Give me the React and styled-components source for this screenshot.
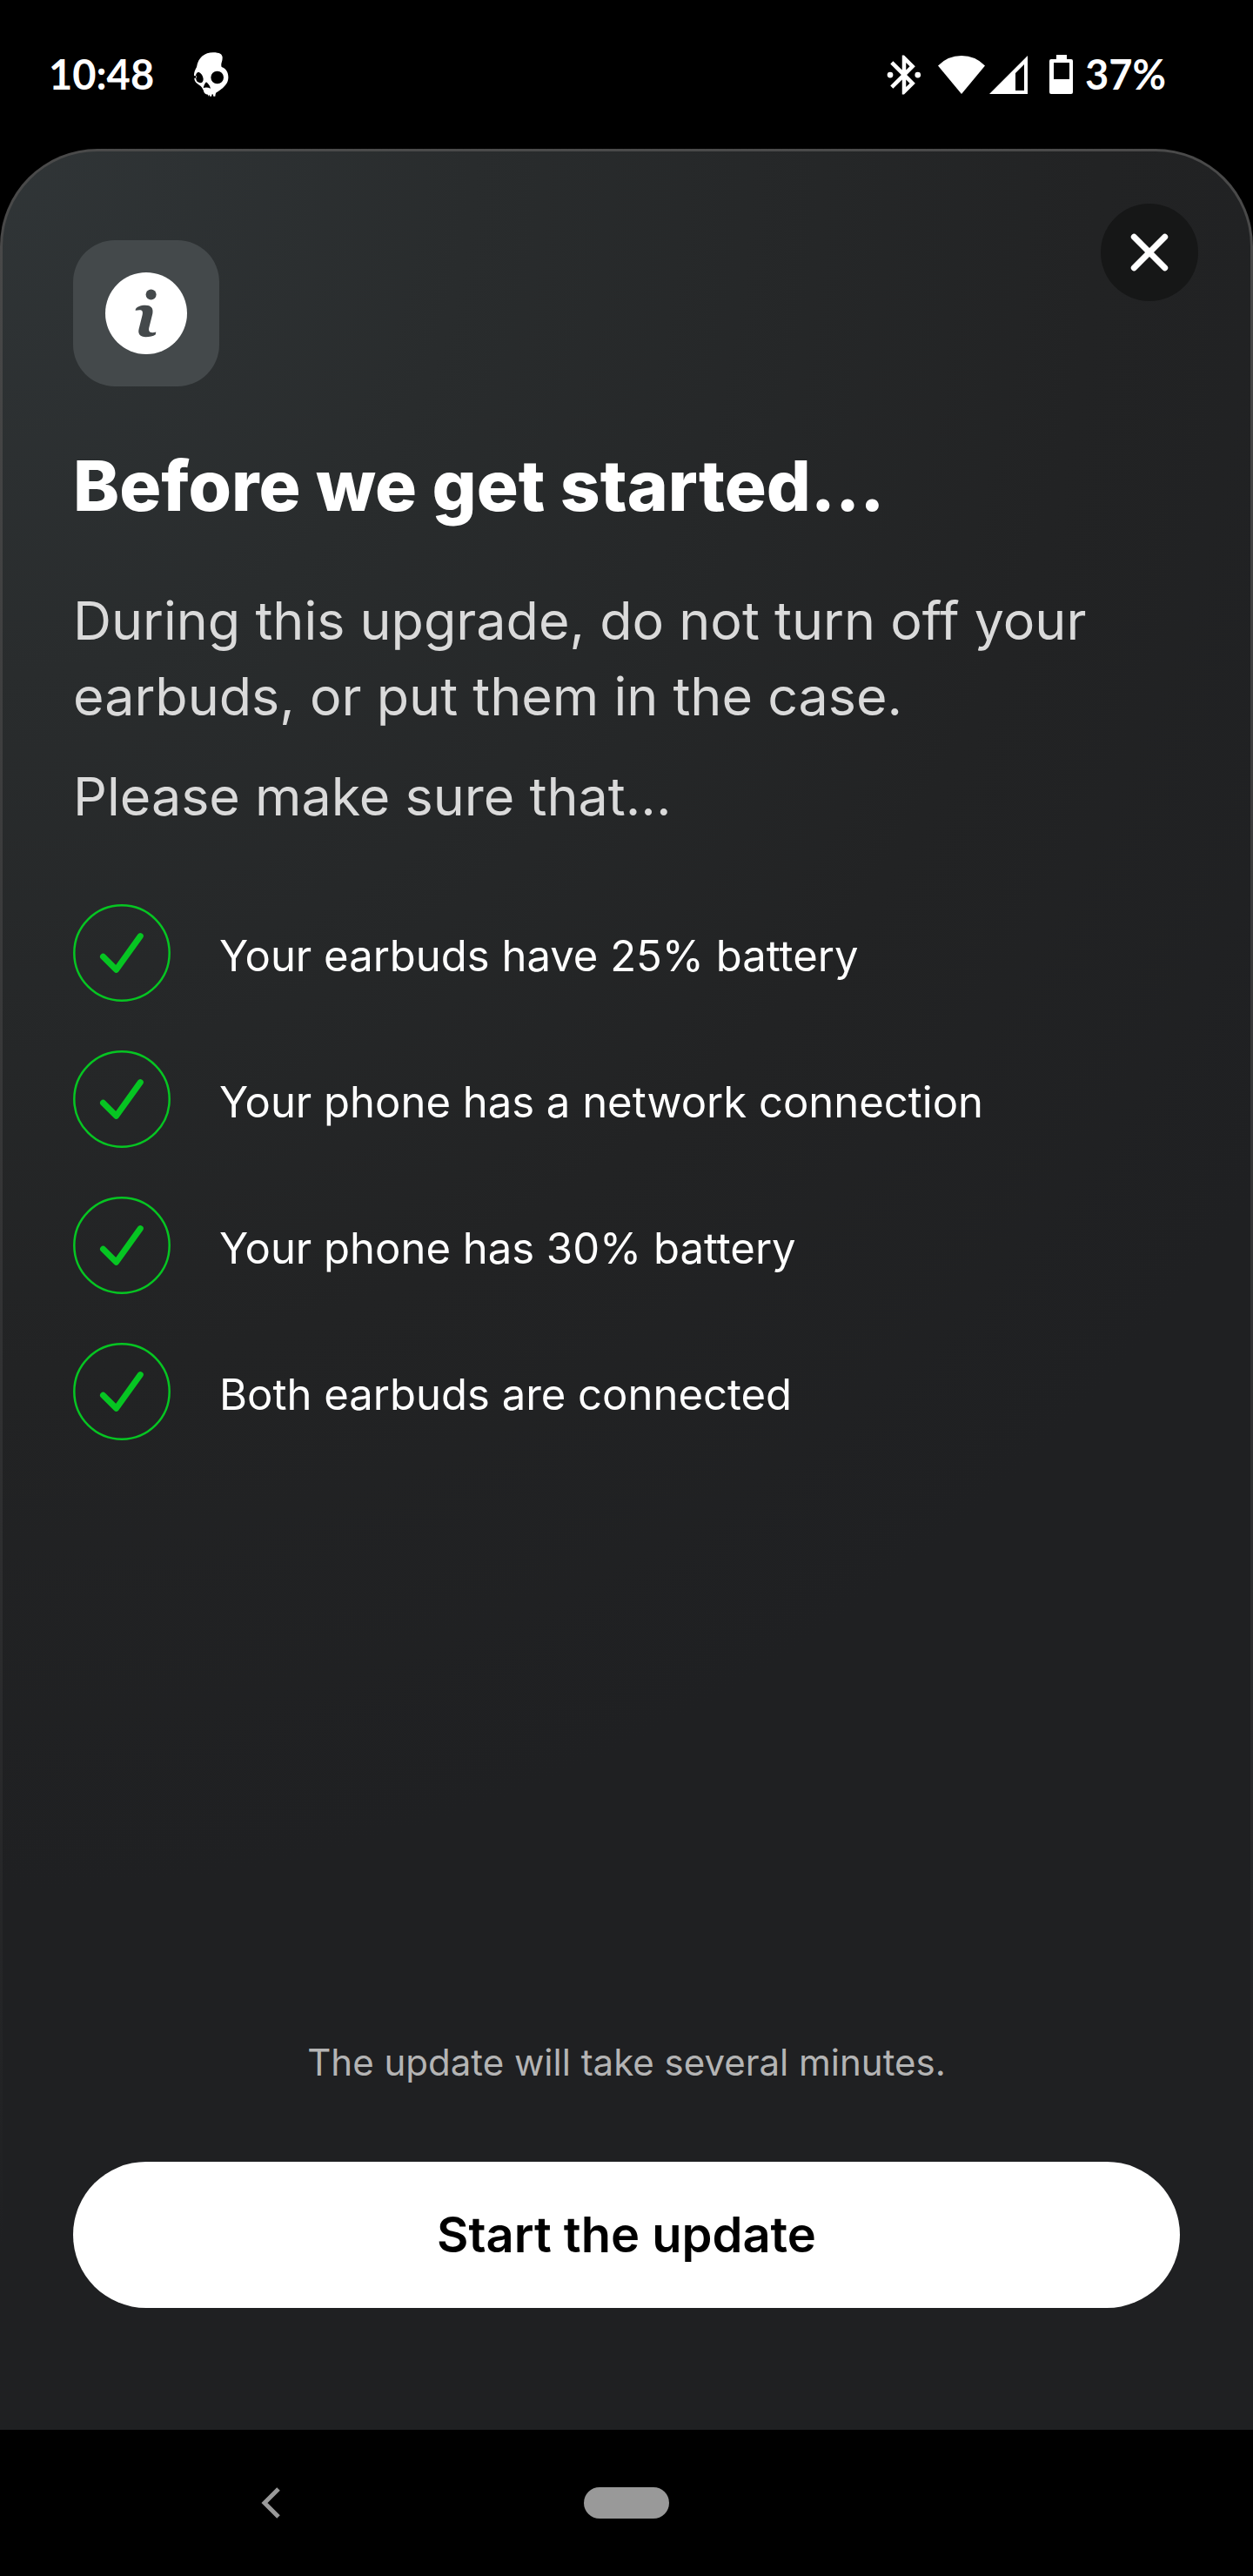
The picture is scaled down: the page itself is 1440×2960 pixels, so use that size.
import React from "react";
import styled, { createGlobalStyle } from "styled-components";

const checks = [
  "Your earbuds have 25% battery",
  "Your phone has a network connection",
  "Your phone has 30% battery",
  "Both earbuds are connected",
];

function SkullIcon() {
  return (
    <svg width="40" height="52" viewBox="0 0 120 154" aria-hidden="true">
      <path
        fill="#fff"
        fillRule="evenodd"
        d="M9 50C14 18 36 0 66 0C88 0 98 6 98 18C98 34 91 38 95 50C112 56 119 70 118 88C117 110 98 124 80 136C75 138 74 141 73 151H67L65 144H62L60 151H55L53 145L50 151L48 145C38 144 34 140 33 132C29 122 26 117 18 112C6 104 1 98 1 88H8V80H0C0 66 4 60 9 50ZM80 64A22 22 0 1 0 80 108A22 22 0 1 0 80 64ZM10 70C5 76 4 88 9 98C14 104 24 107 29 102C35 94 31 80 24 73C19 68 14 66 10 70ZM42 102C36 108 34 116 32 122C40 119 49 120 57 124C54 114 50 108 42 102Z"
      />
    </svg>
  );
}

function BluetoothIcon() {
  return (
    <svg width="54" height="54" viewBox="0 0 24 24" fill="#fff" aria-hidden="true">
      <path d="M17.7 7.7 12 2h-1v7.6L6.4 5 5 6.4l5.6 5.6L5 17.6 6.4 19l4.6-4.6V22h1l5.7-5.7-4.3-4.3ZM13 5.8l1.9 1.9L13 9.6Zm1.9 10.5L13 18.2v-3.8Z" />
      <circle cx="4.9" cy="12" r="1.5" />
      <circle cx="19" cy="12" r="1.5" />
    </svg>
  );
}

function WifiIcon() {
  return (
    <svg width="54" height="46" viewBox="0 0 54 46" aria-hidden="true">
      <path fill="#fff" d="M27 45 0 12.500Q11 1 27 1T54 12.500Z" />
    </svg>
  );
}

function SignalIcon() {
  return (
    <svg width="44" height="46" viewBox="0 0 44 46" aria-hidden="true">
      <path fill="#fff" fillRule="evenodd" d="M0 45 44 1V45ZM30 21V41H40V11Z" />
    </svg>
  );
}

function BatteryIcon() {
  return (
    <svg width="28" height="46" viewBox="0 0 28 46" aria-hidden="true">
      <path
        fill="#fff"
        fillRule="evenodd"
        d="M8 0H20V5H25Q27 5 27 7V43Q27 45 25 45H2Q0 45 0 43V7Q0 5 2 5H8ZM5 9V28H23V9Z"
      />
    </svg>
  );
}

function InfoIcon() {
  return (
    <svg width="94" height="94" viewBox="0 0 94 94" aria-hidden="true">
      <circle cx="47" cy="47" r="47" fill="#fff" />
      <g fill="#44494b">
        <circle cx="52.600" cy="25.600" r="6" />
        <path d="M34.600 43.800C34.600 39.500 41 37.700 46 37.700C52.500 37.700 55.600 41 54.300 47.500L50.200 64C49.500 68.300 51.500 70.300 58.300 68.600L57.700 71.600C55 73.300 51 74.300 46.500 74.300C40 74.300 37.200 70.500 38.600 65L42.600 49C43.700 43.500 42 42.300 34.600 43.800Z" />
      </g>
    </svg>
  );
}

function CloseIcon() {
  return (
    <svg width="44" height="44" viewBox="0 0 44 44" aria-hidden="true">
      <path d="M4.300 4.300 39.700 39.700M39.700 4.300 4.300 39.700" stroke="#fff" strokeWidth="7" strokeLinecap="round" />
    </svg>
  );
}

function CheckIcon() {
  return (
    <svg width="112" height="112" viewBox="0 0 112 112" fill="none" stroke="#06c522" aria-hidden="true">
      <circle cx="56" cy="56" r="54.700" strokeWidth="2.500" />
      <path d="M34.500 60.300 49.600 75.300 77.300 36.600" strokeWidth="7" strokeLinecap="round" strokeLinejoin="round" />
    </svg>
  );
}

function BackIcon() {
  return (
    <svg width="24" height="36" viewBox="0 0 24 36" aria-hidden="true">
      <path d="M20 2 4 18 20 34" fill="none" stroke="#999" strokeWidth="5" />
    </svg>
  );
}

function App() {
  return (
    <Screen>
      <GlobalStyle />
      <StatusBar>
        <StatusText>10:48</StatusText>
        <SkullIcon />
        <StatusIcons>
          <BluetoothIcon />
          <WifiIcon />
          <SignalIcon />
          <BatteryIcon />
          <StatusText>37%</StatusText>
        </StatusIcons>
      </StatusBar>

      <Sheet>
        <CloseButton type="button" aria-label="Close">
          <CloseIcon />
        </CloseButton>
        <InfoTile>
          <InfoIcon />
        </InfoTile>
        <Title>Before we get started...</Title>
        <Lead>During this upgrade, do not turn off your earbuds, or put them in the case.</Lead>
        <Lead>Please make sure that...</Lead>
        <CheckList>
          {checks.map((text) => (
            <CheckRow key={text}>
              <CheckIcon />
              <CheckText>{text}</CheckText>
            </CheckRow>
          ))}
        </CheckList>
        <Footer>
          <Note>The update will take several minutes.</Note>
          <StartButton type="button">Start the update</StartButton>
        </Footer>
      </Sheet>

      <NavBar>
        <BackButton type="button" aria-label="Back">
          <BackIcon />
        </BackButton>
        <HomeButton type="button" aria-label="Home" />
      </NavBar>
    </Screen>
  );
}

const GlobalStyle = createGlobalStyle`
  * {
    box-sizing: border-box;
  }

  body {
    margin: 0;
    background: #000;
    font-family: Inter, "Liberation Sans", sans-serif;
  }

  h1, p, ul {
    margin: 0;
    padding: 0;
  }

  svg {
    display: block;
    flex-shrink: 0;
  }

  button {
    border: 0;
    padding: 0;
    font-family: inherit;
    cursor: pointer;
  }
`;

const Screen = styled.div`
  min-height: 100vh;
  display: flex;
  flex-direction: column;
`;

const StatusBar = styled.header`
  height: 171px;
  padding: 0 100px 0 56px;
  display: flex;
  align-items: center;
  gap: 46px;
`;

const StatusIcons = styled.div`
  margin-left: auto;
  display: flex;
  align-items: center;

  svg + svg {
    margin-left: 5px;
  }

  svg:nth-of-type(2) {
    margin-left: 12px;
  }

  svg:nth-of-type(4) {
    margin-left: 25px;
    margin-right: 13px;
  }
`;

const StatusText = styled.span`
  padding-bottom: 2px;
  color: #fff;
  font-family: Lato, sans-serif;
  font-size: 47px;
  font-weight: 700;
  line-height: 54px;
`;

const Sheet = styled.main`
  position: relative;
  flex: 1;
  display: flex;
  flex-direction: column;
  align-items: flex-start;
  padding: 102px 81px 140px;
  border: 3px solid transparent;
  border-bottom: 0;
  border-radius: 112px 112px 0 0;
  background:
    radial-gradient(ellipse 1800px 2000px at 0 0, #303537 0%, #292c2d 30%, #222324 70%, #1f2022 100%) padding-box,
    linear-gradient(#4a4a4a 0%, #1f2022 92%) border-box;
`;

const CloseButton = styled.button`
  position: absolute;
  top: 60px;
  right: 60px;
  width: 112px;
  height: 112px;
  display: flex;
  align-items: center;
  justify-content: center;
  border-radius: 50%;
  background: #161717;
`;

const InfoTile = styled.div`
  width: 168px;
  height: 168px;
  display: flex;
  align-items: center;
  justify-content: center;
  border-radius: 48px;
  background: #44494b;
`;

const Title = styled.h1`
  margin-top: 60px;
  color: #fff;
  font-size: 80px;
  font-weight: 800;
  line-height: 108px;
`;

const Lead = styled.p`
  margin-top: 28px;
  color: #dadada;
  font-size: 61px;
  line-height: 87px;

  ${Title} + & {
    margin-top: 58px;
  }
`;

const CheckList = styled.ul`
  margin-top: 80px;
  display: flex;
  flex-direction: column;
  gap: 56px;
  list-style: none;
`;

const CheckRow = styled.li`
  display: flex;
  align-items: center;
  gap: 56px;
`;

const CheckText = styled.span`
  padding-top: 8px;
  color: #fff;
  font-size: 49px;
  line-height: 56px;
`;

const Footer = styled.div`
  align-self: stretch;
  margin-top: auto;
  display: flex;
  flex-direction: column;
  gap: 86px;
`;

const Note = styled.p`
  color: #b4b4b4;
  font-size: 42px;
  line-height: 56px;
  text-align: center;
`;

const StartButton = styled.button`
  height: 168px;
  border-radius: 84px;
  background: #fff;
  color: #000;
  font-size: 56px;
  font-weight: 600;
`;

const NavBar = styled.nav`
  height: 168px;
  display: grid;
  grid-template-columns: 1fr 98px 1fr;
  align-items: center;
  justify-items: center;
`;

const BackButton = styled.button`
  padding-right: 48px;
  background: none;
`;

const HomeButton = styled.button`
  width: 98px;
  height: 36px;
  border-radius: 18px;
  background: #999;
`;

export default App;
